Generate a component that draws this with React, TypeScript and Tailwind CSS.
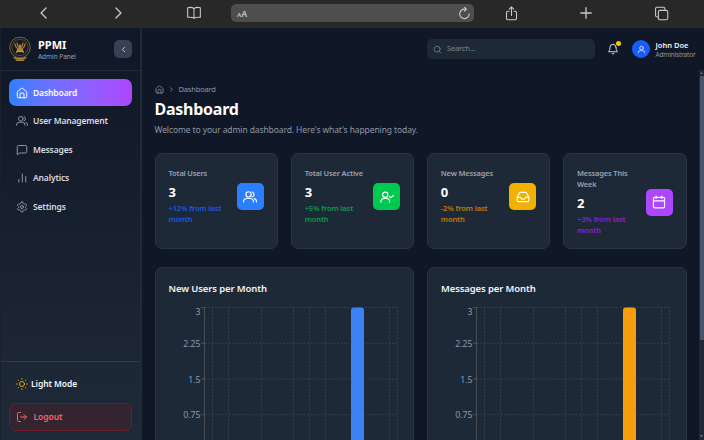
import React from "react";

type IconProps = { className?: string; children: React.ReactNode; sw?: number };

function Icon({ className = "", children, sw = 2 }: IconProps) {
  return (
    <svg
      viewBox="0 0 24 24"
      fill="none"
      stroke="currentColor"
      strokeWidth={sw}
      strokeLinecap="round"
      strokeLinejoin="round"
      className={"shrink-0 " + className}
    >
      {children}
    </svg>
  );
}

const home = (
  <>
    <path d="M2.500 10.500a2 2 0 0 1 .8-1.600l7.400-6a2 2 0 0 1 2.600 0l7.400 6a2 2 0 0 1 .8 1.600V19.500a2 2 0 0 1-2 2H4.500a2 2 0 0 1-2-2z" />
    <path d="M8 21.500V14a2 2 0 0 1 2-2h4a2 2 0 0 1 2 2v7.500" />
  </>
);
const users = (
  <>
    <circle cx="9.500" cy="7.500" r="4.500" />
    <path d="M1 20.500v-.5a5.500 5.500 0 0 1 5.500-5.500h6a5.500 5.500 0 0 1 5.500 5.500v.5" />
    <path d="M16 3.300a4.500 4.500 0 0 1 0 8.400M19.500 14.700a5.500 5.500 0 0 1 3.700 5.300v.5" />
  </>
);
const message = <path d="M21.500 16a2 2 0 0 1-2 2H7l-4.500 3.500V5a2 2 0 0 1 2-2h15a2 2 0 0 1 2 2z" />;
const bars = <path d="M5.500 20v-5M12.500 20V4M19.500 20V9" />;
const gear = (
  <>
    <path d="M12.220 2h-.440a2 2 0 0 0-2 2v.180a2 2 0 0 1-1 1.730l-.430.250a2 2 0 0 1-2 0l-.150-.080a2 2 0 0 0-2.730.730l-.220.380a2 2 0 0 0 .730 2.730l.150.100a2 2 0 0 1 1 1.720v.510a2 2 0 0 1-1 1.740l-.150.090a2 2 0 0 0-.730 2.730l.220.380a2 2 0 0 0 2.730.730l.150-.080a2 2 0 0 1 2 0l.430.250a2 2 0 0 1 1 1.730V20a2 2 0 0 0 2 2h.440a2 2 0 0 0 2-2v-.180a2 2 0 0 1 1-1.730l.430-.250a2 2 0 0 1 2 0l.150.080a2 2 0 0 0 2.730-.730l.220-.390a2 2 0 0 0-.730-2.730l-.150-.080a2 2 0 0 1-1-1.740v-.500a2 2 0 0 1 1-1.740l.150-.090a2 2 0 0 0 .730-2.730l-.220-.380a2 2 0 0 0-2.730-.730l-.150.080a2 2 0 0 1-2 0l-.430-.250a2 2 0 0 1-1-1.730V4a2 2 0 0 0-2-2z" />
    <circle cx="12" cy="12" r="3" />
  </>
);

function Emblem() {
  return (
    <svg viewBox="0 0 24 26" className="h-[26px] w-6 shrink-0" fill="none" stroke="#a57c36">
      <circle cx="12" cy="11.500" r="10.300" strokeWidth="1" opacity=".75" />
      <circle cx="12" cy="11.500" r="8" strokeWidth="1" opacity=".65" strokeDasharray="2 .6" />
      <path d="M7 7.500c.2 3.500 2 5 4 5.500M17 7.500c-.2 3.500-2 5-4 5.500M9 6.500c.1 2.500 1 4 2.200 5M15 6.500c-.1 2.500-1 4-2.200 5" strokeWidth="1.300" />
      <path d="M12 8.500v7M8 16.200c2.500-1.500 5.500-1.500 8 0M9 13.500l3 2 3-2" strokeWidth="1.700" stroke="#c49238" />
      <path d="M5.500 21.500c4 1.600 9 1.600 13 0M7.500 24.300h9" strokeWidth="1.600" />
    </svg>
  );
}

function BrowserBar() {
  return (
    <div className="flex h-7 shrink-0 items-center bg-[#282828] text-[#c9c9c9]">
      <div className="flex w-[231px] items-center pl-[37px]">
        <Icon className="-mt-0.5 h-[14px] w-[14px]" sw={2.200}><path d="M15.500 3.500 7 12l8.500 8.500" /></Icon>
        <Icon className="-mt-0.5 ml-[60px] h-[14px] w-[14px]" sw={2.200}><path d="m8.500 3.500 8.500 8.500-8.500 8.500" /></Icon>
        <Icon className="-mt-0.5 ml-[61px] h-4 w-4" sw={1.600}>
          <path d="M12 5.500v14M12 5.500C10 3.500 6 3.300 2.500 4v14.500c3.500-.5 7.500-.2 9.500 1.500 2-1.700 6-2 9.500-1.500V4C18 3.300 14 3.500 12 5.500z" />
        </Icon>
      </div>
      <div className="-mt-0.5 flex h-[18px] w-[243px] items-center justify-between rounded-[5px] bg-[#4e4e4e] pl-1.5 pr-[3px]">
        <span className="flex items-baseline pt-[3px] font-['Liberation_Sans',sans-serif] font-bold leading-none"><span className="text-[6px]">A</span><span className="text-[8.500px]">A</span></span>
        <Icon className="h-[13px] w-[13px]" sw={2}><path d="M20.500 12.500A8.700 8.700 0 1 1 12 4h3M12 .5 15.500 4 12 7.500" /></Icon>
      </div>
      <Icon className="-mt-0.5 ml-[30px] h-[15px] w-[15px]" sw={1.700}>
        <path d="M8 8.500H6a2 2 0 0 0-2 2V20a2 2 0 0 0 2 2h12a2 2 0 0 0 2-2v-9.500a2 2 0 0 0-2-2h-2M12 15V2M8.500 5 12 1.500 15.500 5" />
      </Icon>
      <Icon className="-mt-0.5 ml-[60px] h-[14px] w-[14px]" sw={2.200}><path d="M12 3v18M3 12h18" /></Icon>
      <Icon className="-mt-0.5 ml-[61px] h-[15px] w-[15px]" sw={1.700}>
        <rect x="7" y="7" width="15" height="15" rx="2.500" />
        <path d="M7 17.500H5A2.500 2.500 0 0 1 2.500 15V4.500A2.500 2.500 0 0 1 5 2h10a2.500 2.500 0 0 1 2.500 2.500V7" />
      </Icon>
    </div>
  );
}

const navItems = [
  { label: "User Management", icon: users },
  { label: "Messages", icon: message },
  { label: "Analytics", icon: bars },
  { label: "Settings", icon: gear },
];

function Sidebar() {
  return (
    <aside className="flex w-[142px] shrink-0 flex-col border-l border-r-2 border-l-[#1b212c] border-r-[#202b3a] bg-gradient-to-b from-[#101727] to-[#1f2a38]">
      <div className="flex h-[43px] shrink-0 items-center border-b border-[#232d3b] pl-[7px] pr-2">
        <Emblem />
        <div className="ml-[6px] flex-1">
          <div className="text-[11px] font-bold leading-[14px] text-white">PPMI</div>
          <div className="text-[6.500px] leading-[9px] tracking-[-0.05px] text-[#99a1af]">Admin Panel</div>
        </div>
        <div className="flex h-[18px] w-[18px] items-center justify-center rounded-[5px] bg-[#364153] text-[#c8cdd5]">
          <Icon className="h-[9px] w-[9px]" sw={2.500}><path d="m15 18-6-6 6-6" /></Icon>
        </div>
      </div>
      <nav className="flex flex-1 flex-col gap-[1.600px] px-2 pt-2">
        <div className="flex h-[27px] items-center rounded-[7px] bg-gradient-to-r from-[#2b7fff] to-[#ad46ff] pl-[6.500px] pt-px text-white">
          <Icon className="-mt-px h-[12px] w-[12px]">{home}</Icon>
          <span className="ml-[5.500px] text-[8.500px] font-semibold tracking-[-0.12px]">Dashboard</span>
        </div>
        {navItems.map((n) => (
          <div key={n.label} className="flex h-[27px] items-center pl-[6.500px] pt-px">
            <Icon className="-mt-px h-[12px] w-[12px] text-[#8b94a2]">{n.icon}</Icon>
            <span className="ml-[5.500px] text-[8.500px] font-semibold tracking-[-0.15px] text-[#d6dae0]">{n.label}</span>
          </div>
        ))}
      </nav>
      <div className="h-[79px] shrink-0 border-t border-[#303c4c] px-2 pt-[9px]">
        <div className="flex h-[26px] items-center pl-[6.500px] text-[#d9a406]">
          <Icon className="h-[12px] w-[12px]">
            <circle cx="12" cy="12" r="5" />
            <path d="M12 1v1.500M12 21.500V23M4.200 4.200l1 1M18.800 18.800l1 1M1 12h1.500M21.500 12H23M4.200 19.800l1-1M18.800 5.200l1-1" />
          </Icon>
          <span className="ml-[3.500px] text-[8.500px] font-semibold tracking-[-0.08px] text-[#f3f4f6]">Light Mode</span>
        </div>
        <div className="mt-[6px] flex h-[28px] items-center rounded-[7px] border border-[#731c2a] bg-[#33242f] pl-[6px] pt-px text-[#f0646b]">
          <Icon className="-mt-px h-[12px] w-[12px]"><path d="M9 21H5a2 2 0 0 1-2-2V5a2 2 0 0 1 2-2h4M16 17l5-5-5-5M21 12H9" /></Icon>
          <span className="ml-[5.500px] text-[8.500px] font-semibold tracking-[-0.08px]">Logout</span>
        </div>
      </div>
    </aside>
  );
}

function Header() {
  return (
    <header className="flex h-[42px] shrink-0 items-center justify-end pr-[8px]">
      <div className="flex h-5 w-[168px] items-center rounded-[5px] bg-[#1e2938] pl-[6px] text-[#7b8594]">
        <Icon className="h-[9px] w-[9px]"><circle cx="11" cy="11" r="8" /><path d="m21 21-4.300-4.300" /></Icon>
        <span className="ml-[5px] text-[7.500px] tracking-[-0.17px]">Search...</span>
      </div>
      <div className="relative ml-[12px] text-[#d5d9df]">
        <Icon className="h-[12px] w-[12px]"><path d="M18 8.500A6 6 0 0 0 6 8.500c0 6.500-3 9-3 9h18s-3-2.500-3-9M10.300 21.500h3.400" /></Icon>
        <span className="absolute -right-[2px] -top-[2px] h-[5px] w-[5px] rounded-full bg-[#fdc700]" />
      </div>
      <div className="ml-[13px] flex h-[18px] w-[18px] items-center justify-center rounded-full bg-[#155dfc] text-[#dbe6ff]">
        <Icon className="h-[9px] w-[9px]" sw={2.300}><circle cx="12" cy="8" r="4.800" /><path d="M3.500 21v-1a5 5 0 0 1 5-5h7a5 5 0 0 1 5 5v1" /></Icon>
      </div>
      <div className="ml-[5.500px] w-[40.500px] whitespace-nowrap pt-px">
        <div className="text-[7.500px] font-semibold leading-[10px] text-[#f3f4f6]">John Doe</div>
        <div className="text-[6.500px] leading-[9px] tracking-[-0.17px] text-[#8d96a4]">Administrator</div>
      </div>
    </header>
  );
}

const stats = [
  {
    title: "Total Users", value: "3", change: "+12% from last month", box: "bg-[#2b7fff]", text: "text-[#1c59e0]", icon: users,
  },
  {
    title: "Total User Active", value: "3", change: "+5% from last month", box: "bg-[#00c950]", text: "text-[#089c43]",
    icon: (<><circle cx="9" cy="8" r="4.500" /><path d="M1.500 21v-1A5.500 5.500 0 0 1 7 14.500h4a5.500 5.500 0 0 1 5.500 5.500v1M16.500 11.500l2 2 4.500-4" /></>),
  },
  {
    title: "New Messages", value: "0", change: "-2% from last month", box: "bg-[#f0b100]", text: "text-[#bd7d08]",
    icon: (<path d="M22 12.500h-5.500l-2 3h-5l-2-3H2M5.500 5.500 2 12.500V18a2 2 0 0 0 2 2h16a2 2 0 0 0 2-2v-5.500l-3.500-7A2.500 2.500 0 0 0 16.500 4h-9a2.500 2.500 0 0 0-2 1.500z" />),
  },
  {
    title: "Messages This Week", value: "2", change: "+3% from last month", box: "bg-[#ad46ff]", text: "text-[#8c19dc]",
    icon: (<><rect x="2.500" y="4" width="19" height="18" rx="2" /><path d="M17 2v4M7 2v4M3 10h18" /></>),
  },
];

function StatCard({ s }: { s: (typeof stats)[number] }) {
  return (
    <div className="h-24 rounded-[7px] border border-[#2a3543] bg-[#1e2938] px-[13px] pt-[14px]">
      <div className="flex items-center justify-between">
        <div className="w-[58px]">
          <div className="w-[62px] text-[7.500px] font-semibold leading-[11px] tracking-[-0.17px] text-[#99a1af]">{s.title}</div>
          <div className="mt-[4px] text-[13px] font-bold leading-[18px] text-white">{s.value}</div>
          <div className={"mt-[2px] w-[60px] text-[7.500px] font-semibold leading-[11px] tracking-[-0.12px] " + s.text}>{s.change}</div>
        </div>
        <div className={"flex h-[27px] w-[27px] items-center justify-center rounded-[5px] text-white " + s.box}>
          <Icon className="h-[14px] w-[14px]">{s.icon}</Icon>
        </div>
      </div>
    </div>
  );
}

const ticks = [
  { label: "3", y: 0.5 },
  { label: "2.25", y: 36.3 },
  { label: "1.5", y: 72 },
  { label: "0.75", y: 107.700 },
];

function ChartCard({ title, color, lines }: { title: string; color: string; lines: number[] }) {
  return (
    <div className="h-[220px] rounded-[7px] border border-[#2a3543] bg-[#1e2938] px-[13px] pt-[14px]">
      <h2 className="text-[9.500px] font-semibold leading-[14px] tracking-[-0.12px] text-[#f3f4f6]">{title}</h2>
      <svg width="232" height="150" className="mt-[11px] block overflow-visible">
        <g stroke="#37424f" strokeWidth="1" strokeDasharray="1.700 1.700">
          {ticks.map((t) => <path key={t.label} d={`M36 ${t.y}H229`} />)}
          {lines.map((x) => <path key={x} d={`M${x} 0V150`} />)}
        </g>
        <g stroke="#4a4f55" strokeWidth="1">
          <path d="M35.500 0V150" />
          {ticks.map((t) => <path key={t.label} d={`M32 ${t.y}h3.500`} />)}
        </g>
        <g fill="#8f98a5" fontSize="8.700" textAnchor="end">
          {ticks.map((t) => <text key={t.label} x="31.500" y={t.y + (t.y < 1 ? 7.500 : 3.500)}>{t.label}</text>)}
        </g>
        <path d="M182 150V3.500a3 3 0 0 1 3-3h7a3 3 0 0 1 3 3V150z" fill={color} />
      </svg>
    </div>
  );
}

export default function App() {
  return (
    <div className="flex h-[440px] w-[704px] flex-col overflow-hidden bg-[#101727] font-['Noto_Sans',sans-serif]">
      <BrowserBar />
      <div className="flex min-h-0 flex-1">
        <Sidebar />
        <div className="flex min-w-0 flex-1 flex-col">
          <Header />
          <div className="flex min-h-0 flex-1">
            <main className="min-w-0 flex-1 overflow-hidden pl-[12.500px] pr-[12.500px] pt-[13px]">
              <div className="flex h-3 items-center text-[#8f98a5]">
                <Icon className="h-[9px] w-[9px]">{home}</Icon>
                <Icon className="ml-[4px] h-[7px] w-[7px]" sw={2.500}><path d="m9 18 6-6-6-6" /></Icon>
                <span className="ml-[4px] pt-px text-[7.500px] tracking-[-0.17px]">Dashboard</span>
              </div>
              <h1 className="mt-[4px] text-[16px] font-bold leading-5 tracking-[-0.25px] text-white">Dashboard</h1>
              <p className="mt-[4px] whitespace-nowrap text-[8.500px] leading-[13px] tracking-[-0.1px] text-[#8f98a5]">Welcome to your admin dashboard. Here's what's happening today.</p>
              <div className="mt-[17px] grid grid-cols-4 gap-[12.700px]">
                {stats.map((s) => <StatCard key={s.title} s={s} />)}
              </div>
              <div className="mt-[18px] grid grid-cols-2 gap-[13px]">
                <ChartCard title="New Users per Month" color="#3b82f6" lines={[43.5, 59.5, 92.5, 124.5, 140.5, 156.5, 220.5, 228.5]} />
                <ChartCard title="Messages per Month" color="#f59e0b" lines={[43.5, 59.5, 92.5, 124.5, 140.5, 156.5, 220.5, 228.5]} />
              </div>
            </main>
            <div className="flex w-[5px] flex-col items-center justify-between bg-[#1e2938]">
              <svg width="5" height="270"><path d="M1 4 2.500 2 4 4z" fill="#64748b" /><rect y="6" x="1" width="4" height="264" fill="#475569" /></svg>
              <svg width="5" height="6"><path d="M1 1h3L2.500 3.500z" fill="#64748b" /></svg>
            </div>
          </div>
        </div>
      </div>
    </div>
  );
}
